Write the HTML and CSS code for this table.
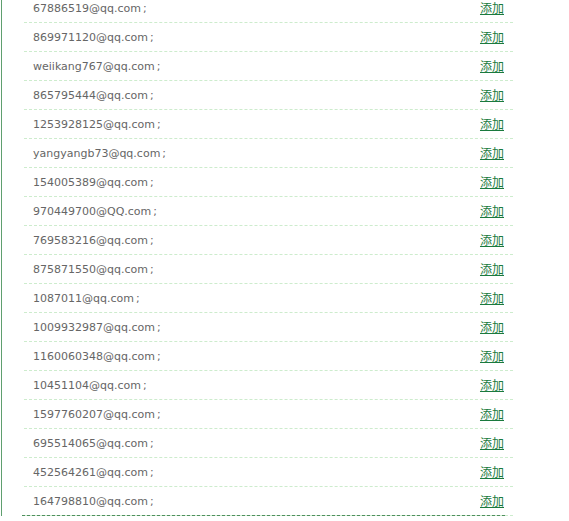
FILE: index.html
```html
<!DOCTYPE html>
<html lang="zh-CN">

<head>
    <meta charset="UTF-8">
    <title>邮箱列表</title>
    <link rel="stylesheet" href="styles.css">
</head>

<body>
    <div class="panel">
        <ul class="mail-list">
            <li><span class="mail">67886519@qq.com<i>;</i></span><a href="#">添加</a></li>
            <li><span class="mail">869971120@qq.com<i>;</i></span><a href="#">添加</a></li>
            <li><span class="mail">weiikang767@qq.com<i>;</i></span><a href="#">添加</a></li>
            <li><span class="mail">865795444@qq.com<i>;</i></span><a href="#">添加</a></li>
            <li><span class="mail">1253928125@qq.com<i>;</i></span><a href="#">添加</a></li>
            <li><span class="mail">yangyangb73@qq.com<i>;</i></span><a href="#">添加</a></li>
            <li><span class="mail">154005389@qq.com<i>;</i></span><a href="#">添加</a></li>
            <li><span class="mail">970449700@QQ.com<i>;</i></span><a href="#">添加</a></li>
            <li><span class="mail">769583216@qq.com<i>;</i></span><a href="#">添加</a></li>
            <li><span class="mail">875871550@qq.com<i>;</i></span><a href="#">添加</a></li>
            <li><span class="mail">1087011@qq.com<i>;</i></span><a href="#">添加</a></li>
            <li><span class="mail">1009932987@qq.com<i>;</i></span><a href="#">添加</a></li>
            <li><span class="mail">1160060348@qq.com<i>;</i></span><a href="#">添加</a></li>
            <li><span class="mail">10451104@qq.com<i>;</i></span><a href="#">添加</a></li>
            <li><span class="mail">1597760207@qq.com<i>;</i></span><a href="#">添加</a></li>
            <li><span class="mail">695514065@qq.com<i>;</i></span><a href="#">添加</a></li>
            <li><span class="mail">452564261@qq.com<i>;</i></span><a href="#">添加</a></li>
            <li><span class="mail">164798810@qq.com<i>;</i></span><a href="#">添加</a></li>
        </ul>
        <div class="list-end"></div>
    </div>
</body>

</html>
```

FILE: styles.css
```css
body {
    margin: 0;
    height: 521px;
    overflow: hidden;
    background: #fff;
    font-family: 'DejaVu Sans', Verdana, sans-serif;
    font-size: 11px;
    color: #666;
}

.panel {
    margin-left: 1px;
    min-height: 100vh;
    border-left: 1px solid #5f9f6f;
}

.mail-list {
    list-style: none;
    margin: -6px 0 0 22px;
    padding: 0;
    width: 489px;
}

.mail-list li {
    display: flex;
    justify-content: space-between;
    align-items: center;
    height: 28px;
    padding: 0 9px;
    border-bottom: 1px dashed #cdeccd;
}

.mail i {
    font-style: normal;
    margin-left: 2px;
}

.mail-list a {
    font-family: 'Noto Sans CJK SC', sans-serif;
    font-size: 12px;
    color: #1a7a3e;
    text-decoration: underline;
    margin-top: -2px;
}

.list-end {
    margin: -1px 0 0 20px;
    width: 483px;
    border-top: 1px dashed #4f8f5f;
}
```
